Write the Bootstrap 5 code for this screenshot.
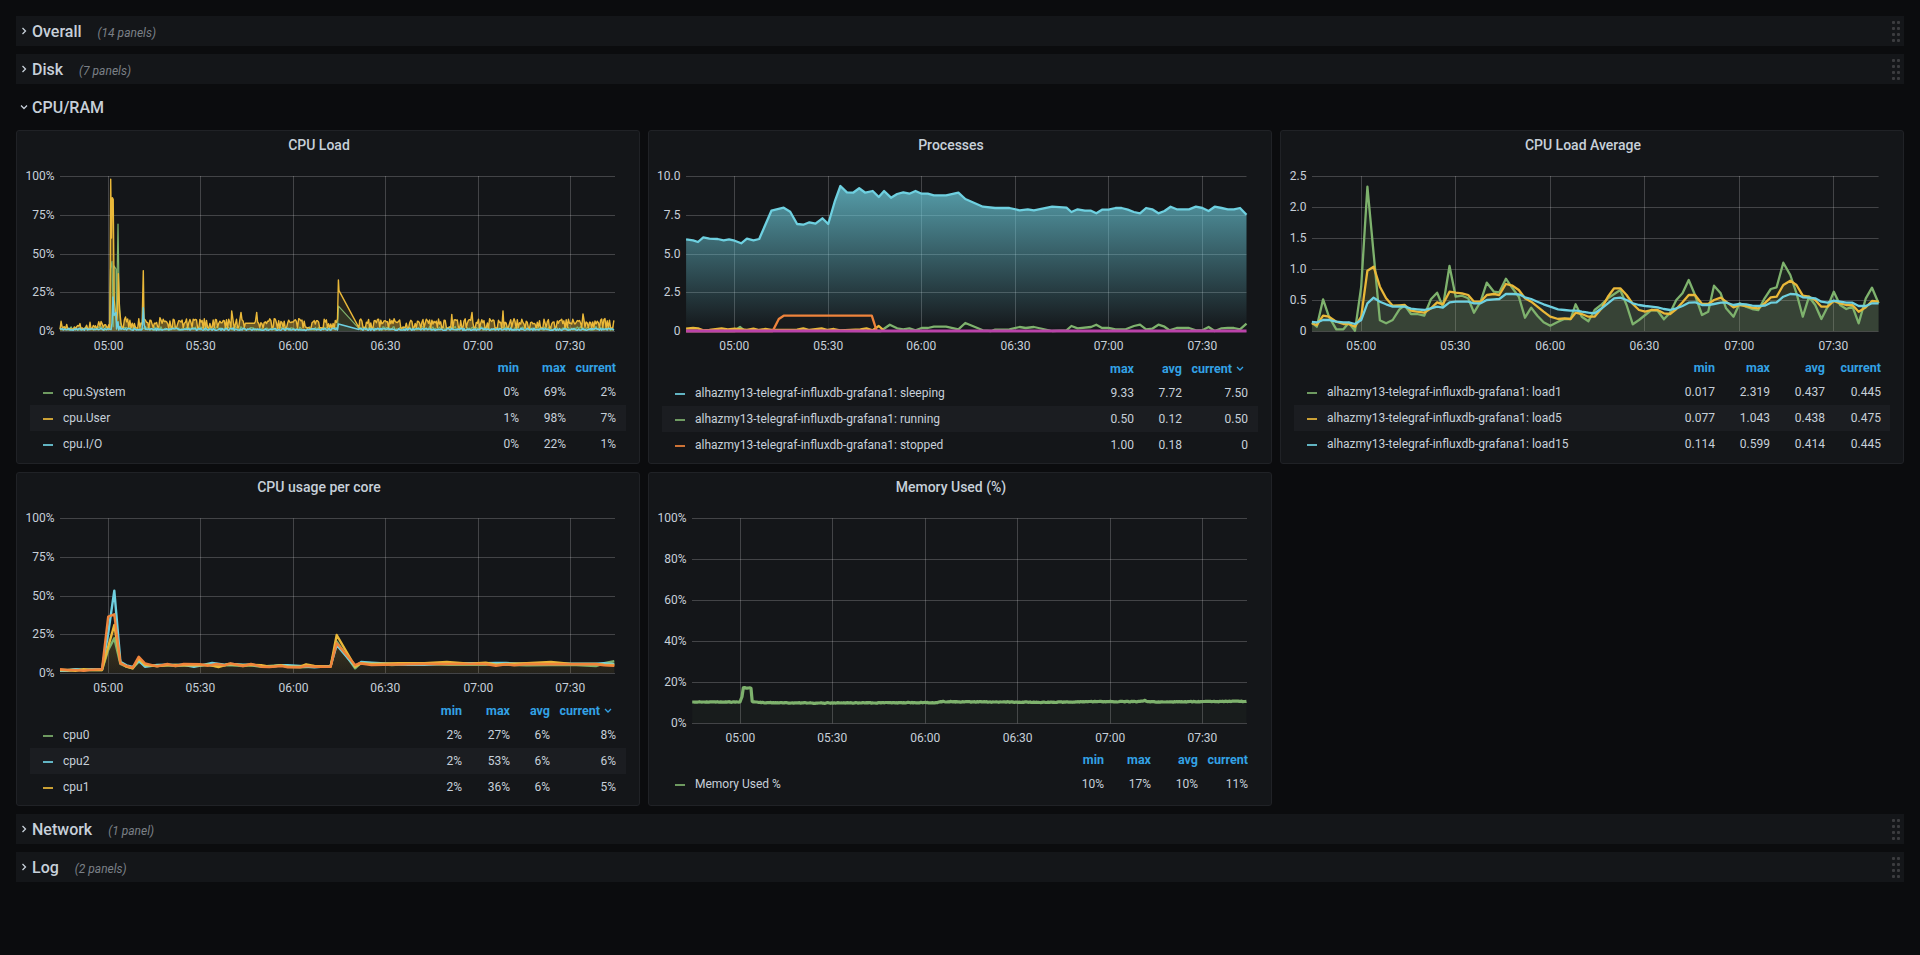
<!doctype html>
<html lang="en">
<head>
<meta charset="utf-8">
<title>Dashboard</title>
<link href="https://cdn.jsdelivr.net/npm/bootstrap@5.3.0/dist/css/bootstrap.min.css" rel="stylesheet">
<style>
body{background:#0b0c0e;color:#c7d0d9;font-family:Roboto,"Liberation Sans",sans-serif;font-size:12px}
.dash{padding:16px}
.dash-row{height:30px;margin-bottom:8px}
.dash-band{background:#141619}
.chev{width:16px;flex:none}
.chev svg{display:block;margin-left:4px}
.row-title{font-size:16px;font-weight:500;line-height:30px;padding-top:1px;color:#c7d0d9}
.row-count{font-size:12px;font-style:italic;color:#7b8087;margin-left:16px;padding-top:3px}
.grip{display:grid;grid-template-columns:3px 3px;column-gap:2px;row-gap:3px;margin-right:4px}
.grip i{display:block;width:3px;height:3px;background:#3b3c3f;border-radius:1px}
.pnl{height:334px;background:#141619;border:1px solid #202226;border-radius:3px}
.pnl-title{height:30px;line-height:28px;font-size:14px;font-weight:500;text-align:center;padding-right:18px;color:#c7d0d9}
.pnl svg.chart{display:block;width:622px;flex:none}
.h195{height:195px}
.h245{height:245px}
.chart text{font-family:Roboto,"Liberation Sans",sans-serif;font-size:12px;fill:#c7d0d9}
.lgd-wrap{margin:0 13px}
.lgd{table-layout:fixed;margin:0;width:100%;font-size:12px}
.lgd>thead>tr>th,.lgd>tbody>tr>td{padding:0;background:transparent;color:#c7d0d9;text-align:right;vertical-align:middle;font-weight:400;box-shadow:none;white-space:nowrap}
.lgd>thead>tr>th{height:23px;color:#33a2e5;font-weight:700;font-size:12.5px;padding-top:2px}
.lgd.sorted>thead>tr>th{height:24px}
.lgd>tbody>tr>td{height:26px}
.lgd>tbody>tr>td:first-child,.lgd>thead>tr>th:first-child{text-align:left;padding-left:13px}
.lgd>tbody>tr.alt>td{background:#1b1d21}
.sw{display:inline-block;width:10px;height:2px;margin-right:10px;vertical-align:middle;opacity:.85}
.s-g{background:#7eb26d}.s-y{background:#eab839}.s-c{background:#6ed0e0}.s-o{background:#ef843c}
.sort-i{margin-left:4px;margin-right:4px;vertical-align:1px}
.c40{width:40px}.c47{width:47px}.c48{width:48px}.c55{width:55px}.c56{width:56px}
.c60{width:60px}.c65{width:65px}.c76{width:76px}
.pe10{padding-right:10px!important}
.pe9{padding-right:9px!important}
</style>
</head>
<body>
<div class="dash">
  <div class="dash-row dash-band d-flex align-items-center">
    <span class="chev"><svg width="8" height="10" viewBox="0 0 8 10"><path d="M2.5 2 L5.5 5 L2.5 8" fill="none" stroke="#c7d0d9" stroke-width="1.3"/></svg></span>
    <span class="row-title">Overall</span><span class="row-count">(14 panels)</span>
    <span class="grip ms-auto"><i></i><i></i><i></i><i></i><i></i><i></i><i></i><i></i></span>
  </div>
  <div class="dash-row dash-band d-flex align-items-center">
    <span class="chev"><svg width="8" height="10" viewBox="0 0 8 10"><path d="M2.5 2 L5.5 5 L2.5 8" fill="none" stroke="#c7d0d9" stroke-width="1.3"/></svg></span>
    <span class="row-title">Disk</span><span class="row-count">(7 panels)</span>
    <span class="grip ms-auto"><i></i><i></i><i></i><i></i><i></i><i></i><i></i><i></i></span>
  </div>
  <div class="dash-row d-flex align-items-center">
    <span class="chev"><svg width="8" height="10" viewBox="0 0 8 10"><path d="M1 3.5 L4 6.5 L7 3.5" fill="none" stroke="#c7d0d9" stroke-width="1.3"/></svg></span>
    <span class="row-title">CPU/RAM</span>
  </div>

  <div class="row g-2 dash-grid">
    <div class="col-4">
      <div class="pnl d-flex flex-column">
        <div class="pnl-title">CPU Load</div>
        <svg class="chart h195" id="c1" viewBox="17 161 622 195"></svg>
        <div class="lgd-wrap">
          <table class="table table-borderless lgd">
            <colgroup><col><col class="c47"><col class="c47"><col class="c60"></colgroup>
            <thead><tr><th></th><th>min</th><th>max</th><th class="pe10">current</th></tr></thead>
            <tbody>
              <tr><td><span class="sw s-g"></span>cpu.System</td><td>0%</td><td>69%</td><td class="pe10">2%</td></tr>
              <tr class="alt"><td><span class="sw s-y"></span>cpu.User</td><td>1%</td><td>98%</td><td class="pe10">7%</td></tr>
              <tr><td><span class="sw s-c"></span>cpu.I/O</td><td>0%</td><td>22%</td><td class="pe10">1%</td></tr>
            </tbody>
          </table>
        </div>
      </div>
    </div>
    <div class="col-4">
      <div class="pnl d-flex flex-column">
        <div class="pnl-title">Processes</div>
        <svg class="chart h195" id="c2" viewBox="649 161 622 195"></svg>
        <div class="lgd-wrap">
          <table class="table table-borderless lgd sorted">
            <colgroup><col><col class="c48"><col class="c48"><col class="c76"></colgroup>
            <thead><tr><th></th><th>max</th><th>avg</th><th class="pe10">current<svg class="sort-i" width="8" height="6" viewBox="0 0 8 6"><path d="M1 1 L4 4 L7 1" fill="none" stroke="#33a2e5" stroke-width="1.3"/></svg></th></tr></thead>
            <tbody>
              <tr><td><span class="sw s-c"></span>alhazmy13-telegraf-influxdb-grafana1: sleeping</td><td>9.33</td><td>7.72</td><td class="pe10">7.50</td></tr>
              <tr class="alt"><td><span class="sw s-g"></span>alhazmy13-telegraf-influxdb-grafana1: running</td><td>0.50</td><td>0.12</td><td class="pe10">0.50</td></tr>
              <tr><td><span class="sw s-o"></span>alhazmy13-telegraf-influxdb-grafana1: stopped</td><td>1.00</td><td>0.18</td><td class="pe10">0</td></tr>
            </tbody>
          </table>
        </div>
      </div>
    </div>
    <div class="col-4">
      <div class="pnl d-flex flex-column">
        <div class="pnl-title">CPU Load Average</div>
        <svg class="chart h195" id="c3" viewBox="1281 161 622 195"></svg>
        <div class="lgd-wrap">
          <table class="table table-borderless lgd">
            <colgroup><col><col class="c56"><col class="c55"><col class="c55"><col class="c65"></colgroup>
            <thead><tr><th></th><th>min</th><th>max</th><th>avg</th><th class="pe9">current</th></tr></thead>
            <tbody>
              <tr><td><span class="sw s-g"></span>alhazmy13-telegraf-influxdb-grafana1: load1</td><td>0.017</td><td>2.319</td><td>0.437</td><td class="pe9">0.445</td></tr>
              <tr class="alt"><td><span class="sw s-y"></span>alhazmy13-telegraf-influxdb-grafana1: load5</td><td>0.077</td><td>1.043</td><td>0.438</td><td class="pe9">0.475</td></tr>
              <tr><td><span class="sw s-c"></span>alhazmy13-telegraf-influxdb-grafana1: load15</td><td>0.114</td><td>0.599</td><td>0.414</td><td class="pe9">0.445</td></tr>
            </tbody>
          </table>
        </div>
      </div>
    </div>
    <div class="col-4">
      <div class="pnl d-flex flex-column">
        <div class="pnl-title">CPU usage per core</div>
        <svg class="chart h195" id="c4" viewBox="17 503 622 195"></svg>
        <div class="lgd-wrap">
          <table class="table table-borderless lgd sorted">
            <colgroup><col><col class="c47"><col class="c48"><col class="c40"><col class="c76"></colgroup>
            <thead><tr><th></th><th>min</th><th>max</th><th>avg</th><th class="pe10">current<svg class="sort-i" width="8" height="6" viewBox="0 0 8 6"><path d="M1 1 L4 4 L7 1" fill="none" stroke="#33a2e5" stroke-width="1.3"/></svg></th></tr></thead>
            <tbody>
              <tr><td><span class="sw s-g"></span>cpu0</td><td>2%</td><td>27%</td><td>6%</td><td class="pe10">8%</td></tr>
              <tr class="alt"><td><span class="sw s-c"></span>cpu2</td><td>2%</td><td>53%</td><td>6%</td><td class="pe10">6%</td></tr>
              <tr><td><span class="sw s-y"></span>cpu1</td><td>2%</td><td>36%</td><td>6%</td><td class="pe10">5%</td></tr>
            </tbody>
          </table>
        </div>
      </div>
    </div>
    <div class="col-4">
      <div class="pnl d-flex flex-column">
        <div class="pnl-title">Memory Used (%)</div>
        <svg class="chart h245" id="c5" viewBox="649 503 622 245"></svg>
        <div class="lgd-wrap">
          <table class="table table-borderless lgd">
            <colgroup><col><col class="c47"><col class="c47"><col class="c47"><col class="c60"></colgroup>
            <thead><tr><th></th><th>min</th><th>max</th><th>avg</th><th class="pe10">current</th></tr></thead>
            <tbody>
              <tr><td><span class="sw s-g"></span>Memory Used %</td><td>10%</td><td>17%</td><td>10%</td><td class="pe10">11%</td></tr>
            </tbody>
          </table>
        </div>
      </div>
    </div>
  </div>

  <div class="dash-row dash-band d-flex align-items-center mt-2">
    <span class="chev"><svg width="8" height="10" viewBox="0 0 8 10"><path d="M2.5 2 L5.5 5 L2.5 8" fill="none" stroke="#c7d0d9" stroke-width="1.3"/></svg></span>
    <span class="row-title">Network</span><span class="row-count">(1 panel)</span>
    <span class="grip ms-auto"><i></i><i></i><i></i><i></i><i></i><i></i><i></i><i></i></span>
  </div>
  <div class="dash-row dash-band d-flex align-items-center">
    <span class="chev"><svg width="8" height="10" viewBox="0 0 8 10"><path d="M2.5 2 L5.5 5 L2.5 8" fill="none" stroke="#c7d0d9" stroke-width="1.3"/></svg></span>
    <span class="row-title">Log</span><span class="row-count">(2 panels)</span>
    <span class="grip ms-auto"><i></i><i></i><i></i><i></i><i></i><i></i><i></i><i></i></span>
  </div>
</div>

<script src="https://cdn.jsdelivr.net/npm/bootstrap@5.3.0/dist/js/bootstrap.bundle.min.js"></script>
<script>
var G='#7eb26d',Y='#eab839',C='#6ed0e0',O='#ef843c',M='#ba43a9';
var TIMES=['05:00','05:30','06:00','06:30','07:00','07:30'];
function seeded(a){return function(){a|=0;a=a+0x6D2B79F5|0;var t=Math.imul(a^a>>>15,1|a);t=t+Math.imul(t^t>>>7,61|t)^t;return((t^t>>>14)>>>0)/4294967296;}}
function fmt(pts){return pts.map(function(p){return p[0].toFixed(1)+','+p[1].toFixed(1)}).join(' ');}
function frame(svg,o){
  var h='';
  o.ylabels.forEach(function(l,i){
    var y=o.ygrid[i],yy=Math.round(y)+.5;
    h+='<line x1="'+o.l+'" x2="'+o.r+'" y1="'+yy+'" y2="'+yy+'" stroke="#fff" stroke-opacity=".2"/>';
    h+='<text x="'+(o.l-5.5)+'" y="'+(y+4)+'" text-anchor="end">'+l+'</text>';
  });
  o.ticks.forEach(function(x,i){
    var xx=Math.floor(x)+.5,t=o.ygrid[0],b=o.ygrid[o.ygrid.length-1];
    h+='<line x1="'+xx+'" x2="'+xx+'" y1="'+t+'" y2="'+b+'" stroke="#fff" stroke-opacity=".2"/>';
    h+='<text x="'+x+'" y="'+(b+19)+'" text-anchor="middle">'+TIMES[i]+'</text>';
  });
  return h;
}
function area(pts,bottom,fill,op){
  var a=pts.concat([[pts[pts.length-1][0],bottom],[pts[0][0],bottom]]);
  return '<polygon points="'+fmt(a)+'" fill="'+fill+'" fill-opacity="'+op+'"/>';
}
function line(pts,col,w){return '<polyline points="'+fmt(pts)+'" fill="none" stroke="'+col+'" stroke-width="'+w+'" stroke-linejoin="round"/>';}
function parse(s,fx,fy){var n=s.trim().split(/[\s,]+/).map(Number),r=[];for(var i=0;i<n.length;i+=2)r.push([fx(n[i]),fy(n[i+1])]);return r;}

/* CPU Load */
(function(){
  var svg=document.getElementById('c1'),b=331,l=60,r=615,rnd=seeded(7);
  var o={l:l,r:r,ygrid:[176,214.75,253.5,292.25,331],ylabels:['100%','75%','50%','25%','0%'],ticks:[108.6,200.8,293.4,385.5,478,570.3]};
  var h=frame(svg,o);
  function gen(fn,over){
    var p=[];
    for(var x=l;x<=r;x+=1.11){ if(x>338&&x<358)continue; if(x>=245&&x<255&&fn===yf)p.push([x,5]); else p.push([x,fn(x)]); }
    over.forEach(function(v){p.push([v[0],v[1]]);});
    p=p.filter(function(q,i){if(i>=p.length-over.length)return true;return !over.some(function(v){return Math.abs(v[0]-q[0])<.6;});});
    p.sort(function(a,c){return a[0]-c[0];});
    return p.map(function(q){return [q[0],b-q[1]*1.55];});
  }
  function yf(x){var k=rnd(),big=rnd();var v=x<110?1+k*k*5.5:(k<.35?1.5+k*3:2.5+k*5.5); if(big>.985)v+=3; return v;}
  function gf(x){return .3+rnd()*2.6;}
  function cf(x){return .4+rnd()*1.4;}
  var ys=gen(yf,[[110.7,98],[111.5,60],[112.3,86],[113.2,85],[114.2,20],[115.5,12],[117.5,12],[118.3,37],[119.5,14],[143.3,39],[144,8],[231.7,13],[241,12],[256.7,12],[338.4,33],[339,26],[359,2],[472,12],[503,13],[583,11]]);
  var gs=gen(gf,[[109.5,4],[110.5,40],[112,45],[114,42],[116,40],[117.3,42],[118,69],[119.2,20],[120.5,5],[338.5,16],[359,1.5]]);
  var cs=gen(cf,[[112,5],[113,22],[114,10],[116,12],[118,6],[120,3],[143.3,15],[144.2,4],[338.5,4.5],[359,1]]);
  var yA=ys.filter(function(q){return q[0]<338.4;}),yW=ys.filter(function(q){return q[0]>=338.4&&q[0]<=359;}),yB=ys.filter(function(q){return q[0]>359;});
  h+=area(gs,b,G,.1)+area(yA,b,Y,.4)+area(yW,b,Y,.1)+area(yB,b,Y,.4)+area(cs,b,C,.1);
  h+=line(gs,G,1.2)+line(ys,Y,1.4)+line(cs,C,1.5);
  svg.innerHTML=h;
})();

/* Processes */
(function(){
  var svg=document.getElementById('c2'),b=331;
  var fx=function(x){return 640+x/2.45},fy=function(y){return 120+y/3};
  var o={l:686,r:1246.5,ygrid:[176,214.75,253.5,292.25,331],ylabels:['10.0','7.5','5.0','2.5','0'],ticks:[734.3,828.2,921.2,1015.5,1108.6,1202.4]};
  var sleep=parse('113,358 130,361 142,366 155,352 170,356 190,357 205,361 218,358 232,362 248,370 262,356 278,361 292,357 322,272 352,263 368,275 385,312 400,314 415,307 430,311 447,295 461,312 477,245 491,198 507,217 522,218 537,205 552,218 570,213 585,231 598,213 615,233 630,222 645,217 660,221 675,213 690,221 705,221 720,226 750,226 780,218 797,237 840,260 870,264 905,264 930,271 950,268 965,271 1010,260 1045,263 1057,276 1072,268 1090,272 1105,272 1118,280 1132,269 1148,269 1165,264 1180,264 1195,269 1210,276 1225,280 1240,264 1255,268 1270,280 1285,273 1300,260 1315,268 1345,268 1362,260 1378,264 1393,273 1408,260 1425,264 1440,268 1455,268 1470,264 1486,284',fx,fy);
  var run=parse('113,633 232,633 245,621 255,631 590,633 612,614 630,625 645,628 660,625 675,631 690,624 705,624 720,620 750,620 780,628 797,609 840,631 860,633 870,629 905,628 930,621 945,624 965,621 1010,633 1045,631 1057,618 1072,625 1105,621 1118,614 1132,624 1148,624 1165,628 1190,628 1210,618 1225,614 1240,628 1255,626 1270,614 1285,620 1297,631 1315,624 1345,624 1362,631 1378,631 1393,621 1408,633 1425,625 1440,624 1455,624 1470,628 1486,611',fx,fy);
  var yel=parse('113,626 130,624 142,625 155,631 170,630 200,625 215,628 232,626 250,628 262,630 278,626 292,630 307,627 322,630 385,629 400,625 415,630 445,625 460,630 475,627 490,631 540,628 555,625 570,631 585,618 597,631',fx,fy);
  var stop=parse('113,633 325,633 340,597 352,587 568,587 580,633',fx,fy);
  var pur=parse('113,633 1486,633',fx,fy);
  var h='<defs><linearGradient id="gc" gradientUnits="userSpaceOnUse" x1="0" x2="0" y1="176" y2="331"><stop offset="0" stop-color="'+C+'" stop-opacity=".78"/><stop offset="1" stop-color="'+C+'" stop-opacity="0"/></linearGradient></defs>';
  h+=frame(svg,o);
  h+=area(sleep,b,'url(#gc)',1);
  h+=area(stop,b,'#1a1b1c',.75);
  h+=line(sleep,C,2.3)+line(run,G,2.3)+line(yel,Y,2.3)+line(stop,O,2.3)+line(pur,M,3);
  svg.innerHTML=h;
})();

/* CPU Load Average */
(function(){
  var svg=document.getElementById('c3'),b=331.3;
  var fx=function(x){return 1270+x/2.412},fy=function(y){return 120+y/3};
  var o={l:1312,r:1878.6,ygrid:[176,207,238,269,300,331],ylabels:['2.5','2.0','1.5','1.0','0.5','0'],ticks:[1361.2,1455.3,1550.3,1644.4,1739.3,1833.4]};
  var g=parse('101,608 113,620 128,538 142,590 160,628 177,628 190,608 205,632 220,500 235,200 250,400 265,601 280,610 296,600 312,568 325,556 340,582 355,582 372,587 388,538 403,518 417,560 433,438 448,530 463,527 478,535 492,578 508,545 523,488 540,515 553,517 569,476 585,505 600,530 615,593 630,563 645,587 660,607 676,617 695,605 710,597 725,597 737,553 752,590 768,604 783,570 800,553 815,535 845,510 860,555 875,613 890,600 905,585 920,570 935,572 950,598 965,578 980,540 995,520 1010,480 1025,525 1042,585 1057,575 1071,497 1087,520 1100,565 1118,590 1133,550 1148,560 1163,567 1178,570 1193,535 1208,507 1222,502 1238,428 1255,465 1270,520 1285,590 1300,530 1315,555 1330,597 1345,560 1360,515 1375,555 1390,567 1405,560 1420,610 1437,535 1452,503 1468,550',fx,fy);
  var y=parse('101,610 113,615 128,587 142,590 160,605 177,612 190,612 205,620 220,590 235,452 250,440 265,500 280,535 296,557 312,556 325,555 340,572 355,575 372,578 388,565 403,547 417,553 433,515 448,518 463,520 478,525 492,545 508,545 523,525 540,522 553,525 569,492 585,497 600,510 615,535 630,545 645,560 660,575 676,590 695,597 710,595 725,597 737,578 752,582 768,590 783,590 800,565 815,530 830,505 845,505 860,525 875,552 890,570 905,575 920,570 935,570 950,580 965,582 980,567 995,547 1010,525 1025,525 1042,552 1057,552 1071,540 1087,533 1100,545 1118,562 1133,555 1148,558 1163,563 1178,565 1193,550 1208,532 1222,530 1238,495 1255,482 1270,495 1285,527 1300,530 1315,540 1330,560 1345,560 1360,543 1375,550 1390,555 1405,555 1420,575 1437,562 1452,543 1468,545',fx,fy);
  var c=parse('101,606 113,607 128,600 142,600 160,605 177,607 190,607 205,612 220,600 235,550 250,533 265,545 280,553 296,560 312,560 325,560 340,566 355,568 372,570 388,565 403,560 417,563 433,547 448,545 463,545 478,545 492,550 508,550 523,540 540,538 553,537 569,522 585,522 600,523 615,532 630,537 645,545 660,553 676,560 695,568 710,570 725,572 740,572 752,575 768,578 783,580 800,565 815,550 830,535 845,533 860,540 875,550 890,555 905,558 920,560 935,562 950,567 965,570 980,565 995,558 1010,548 1025,547 1042,555 1057,555 1071,552 1087,548 1100,548 1118,555 1133,552 1148,553 1163,557 1178,558 1193,557 1208,548 1222,547 1238,530 1255,522 1270,523 1285,532 1300,533 1315,535 1330,545 1345,548 1360,542 1375,545 1390,548 1405,548 1420,558 1437,558 1452,550 1468,550',fx,fy);
  var h=frame(svg,o);
  h+=area(g,b,G,.1)+area(y,b,Y,.1)+area(c,b,C,.1);
  h+=line(g,G,2.3)+line(y,Y,2.3)+line(c,C,2.3);
  svg.innerHTML=h;
})();

/* CPU usage per core */
(function(){
  var svg=document.getElementById('c4'),b=673;
  var fx=function(x){return x/2.45},fy=function(y){return 470+y/3};
  var o={l:60,r:615,ygrid:[518.3,557,595.7,634.4,673],ylabels:['100%','75%','50%','25%','0%'],ticks:[108.2,200.4,293.5,385.3,478.4,570.2]};
  var org='147,598 165,600 185,600 205,602 225,599 250,598 265,440 280,433 295,580 310,588 325,593 340,560 355,580 385,589 410,582 430,588 450,582 490,583 510,587 530,582 550,586 565,580 595,588 615,582 640,590 660,591 690,588 705,592 735,592 750,588 770,590 810,590 825,520 870,585 880,580 910,585 1000,583 1040,582 1100,582 1190,582 1215,587 1240,583 1260,586 1290,582 1400,583 1460,583 1480,586 1505,587';
  var cya='147,602 165,602 185,598 205,600 225,598 250,598 265,490 280,362 295,575 310,586 325,591 340,572 355,590 385,585 410,584 430,585 450,584 475,590 500,584 520,579 550,584 565,582 595,584 615,584 640,588 660,590 690,586 705,586 735,588 770,592 810,588 825,525 870,590 885,576 910,578 1000,584 1040,584 1100,580 1190,580 1215,579 1240,579 1280,581 1320,580 1400,581 1460,581 1480,580 1505,583';
  var yel='147,600 165,601 185,602 205,598 225,600 250,600 265,530 280,465 295,578 310,590 325,595 340,566 355,585 385,588 410,586 430,585 450,586 490,586 510,584 535,591 560,582 595,586 615,584 640,586 660,590 690,586 705,590 735,590 750,583 770,588 810,590 825,495 870,590 885,580 910,582 975,580 1040,580 1095,576 1150,581 1190,578 1215,584 1240,582 1290,580 1350,576 1400,582 1460,582 1480,584 1505,585';
  var grn='147,600 165,600 185,598 205,600 225,600 250,600 265,540 280,505 295,582 310,590 325,595 340,575 355,585 385,588 410,584 430,588 450,586 490,586 510,586 530,588 560,585 595,588 615,586 640,590 660,588 690,586 705,590 735,592 770,590 810,588 825,515 870,595 885,578 910,580 960,585 1000,582 1040,582 1100,584 1190,584 1215,582 1240,584 1290,586 1400,584 1460,588 1480,580 1505,574';
  var g=parse(grn,fx,fy),c=parse(cya,fx,fy),y=parse(yel,fx,fy),r=parse(org,fx,fy);
  var h=frame(svg,o);
  h+='<defs><linearGradient id="gp" gradientUnits="userSpaceOnUse" x1="0" x2="0" y1="630" y2="673"><stop offset="0" stop-color="'+Y+'" stop-opacity=".12"/><stop offset="1" stop-color="'+Y+'" stop-opacity=".04"/></linearGradient></defs>';
  h+=area(y,b,'url(#gp)',1)+area(g,b,'url(#gp)',1);
  h+=line(g,G,2.4)+line(c,C,2.4)+line(y,Y,2.4)+line(r,O,2.4);
  svg.innerHTML=h;
})();

/* Memory Used */
(function(){
  var svg=document.getElementById('c5'),b=723.3,rnd=seeded(11);
  var fx=function(x){return 640+x/2.45},fy=function(y){return 470+y/3};
  var o={l:692,r:1247,ygrid:[518.3,559.3,600.3,641.3,682.3,723.3],ylabels:['100%','80%','60%','40%','20%','0%'],ticks:[740.4,832.2,925.3,1017.6,1110.2,1202.4]};
  var p=parse('128,696 245,696 250,680 253,653 272,655 275,695 300,698 420,699 690,698 725,698 740,695 1000,697 1100,695 1225,695 1237,692 1250,696 1486,694',fx,fy);
  var pts=[];
  for(var i=0;i<p.length-1;i++){
    var a=p[i],e=p[i+1],n=Math.max(1,Math.round((e[0]-a[0])/1.2));
    for(var j=0;j<n;j++){var t=j/n;var flat=Math.abs(e[1]-a[1])<2;pts.push([a[0]+(e[0]-a[0])*t,a[1]+(e[1]-a[1])*t+(flat?(rnd()-.5)*.7:0)]);}
  }
  pts.push(p[p.length-1]);
  var h=frame(svg,o);
  h+=area(pts,b,G,.04);
  h+=line(pts,G,3.2);
  svg.innerHTML=h;
})();
</script>
</body>
</html>
